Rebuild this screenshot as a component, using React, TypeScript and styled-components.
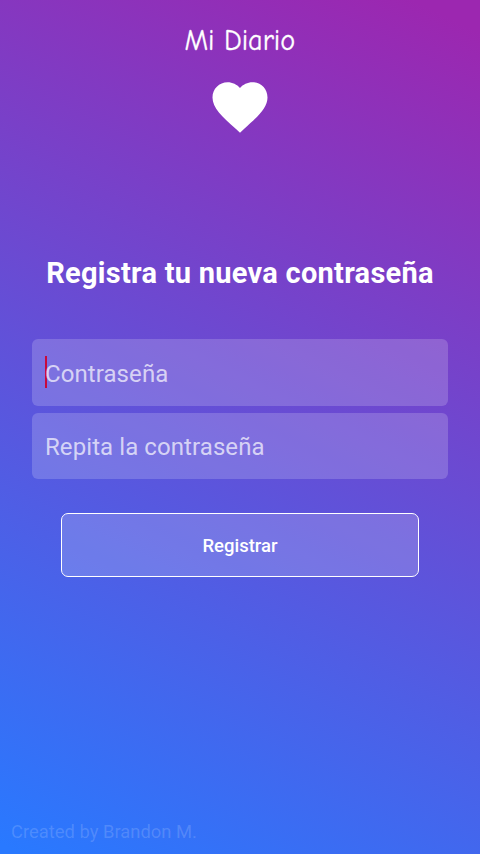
import React from 'react';
import styled, { createGlobalStyle } from 'styled-components';

const Global = createGlobalStyle`
  * { box-sizing: border-box; }
  body { margin: 0; font-family: Roboto, sans-serif; }
`;
const Screen = styled.main`
  width: 480px; height: 854px; display: flex; flex-direction: column; align-items: center;
  background: linear-gradient(26deg, #2979ff 1%, #9c27b0 97%);
  color: #fff; overflow: hidden;
`;
const Brand = styled.div`
  height: 36px; margin-top: 22px; font: 400 31px/36px "Comic Neue", cursive; white-space: nowrap;
  transform: scaleX(.91); -webkit-text-stroke: .3px #fff;
`;
const Heart = styled.svg`
  width: 66px; height: 66px; margin-top: 16px; fill: #fff; flex: none;
`;
const Title = styled.h1`
  margin: 114px 0 0; font-size: 29px; line-height: 38px; font-weight: 700; letter-spacing: .27px; white-space: nowrap;
`;
const Fields = styled.div`
  width: 416px; margin-top: 47px; display: flex; flex-direction: column; gap: 7px;
`;
const Field = styled.div`
  height: 66.5px; padding: 3px 13px 0; display: flex; align-items: center; border-radius: 6px;
  background: rgba(255,255,255,.18); color: rgba(255,255,255,.7); font-size: 24px; letter-spacing: .08px; white-space: nowrap;
`;
const Caret = styled.span`
  width: 2px; height: 32px; margin: -4px -2px 0 0; background: #c80a3c;
`;
const Submit = styled.button`
  width: 358px; height: 64px; margin-top: 33.5px; padding: 2px 0 0; border: 1.5px solid #fff; border-radius: 7px;
  background: rgba(255,255,255,.18); color: #fff; font: 500 18.5px Roboto, sans-serif;
`;
const Credit = styled.footer`
  margin: auto auto 10px 11px; font-size: 18.4px; line-height: 24px; color: rgba(255,255,255,.16);
`;

export default function App() {
  return (
    <Screen>
      <Global />
      <Brand>Mi Diario</Brand>
      <Heart viewBox="0 0 24 24"><path d="M12 21.35l-1.45-1.32C5.4 15.36 2 12.28 2 8.5 2 5.42 4.42 3 7.5 3c1.74 0 3.41.81 4.5 2.09C13.09 3.81 14.76 3 16.5 3 19.58 3 22 5.42 22 8.5c0 3.78-3.4 6.86-8.55 11.54L12 21.35z" /></Heart>
      <Title>Registra tu nueva contraseña</Title>
      <Fields>
        <Field><Caret />Contraseña</Field>
        <Field>Repita la contraseña</Field>
      </Fields>
      <Submit>Registrar</Submit>
      <Credit>Created by Brandon M.</Credit>
    </Screen>
  );
}
